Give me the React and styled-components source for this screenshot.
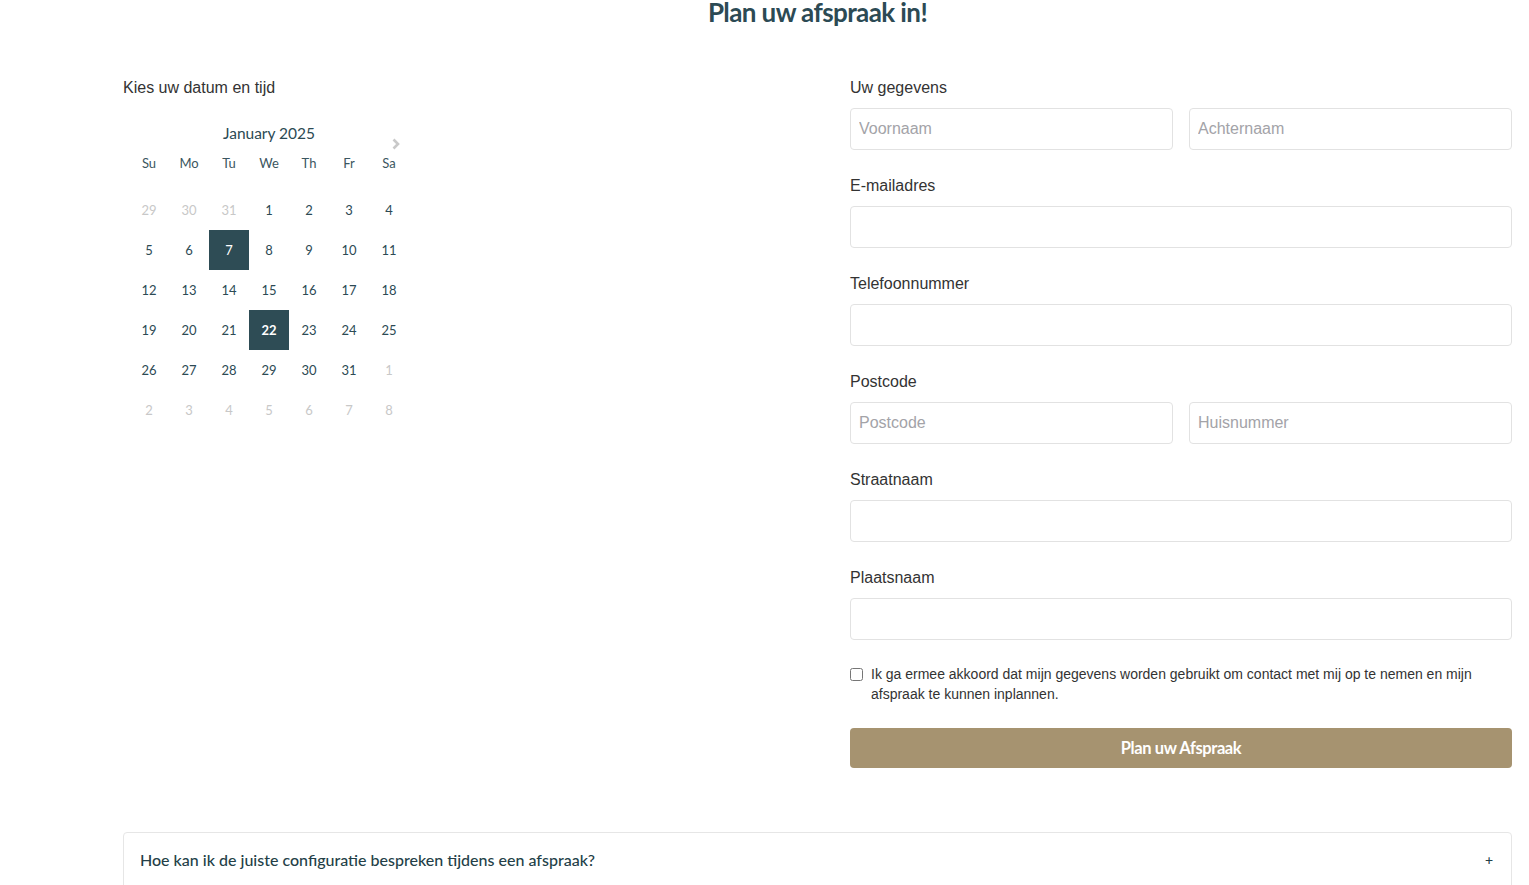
import React from 'react';
import styled, { createGlobalStyle } from 'styled-components';

const GlobalStyle = createGlobalStyle`
  body {
    margin: 0;
    background: #fff;
    font-family: "Liberation Sans", Arial, sans-serif;
    color: #333;
  }
  * { box-sizing: border-box; }
`;

const weekDays = ['Su', 'Mo', 'Tu', 'We', 'Th', 'Fr', 'Sa'];

const buildDays = () => {
  const days = [29, 30, 31].map((d) => ({ d, muted: true }));
  for (let i = 1; i <= 31; i++) days.push({ d: i });
  days.push({ d: 1, muted: true });
  for (let i = 2; i <= 8; i++) days.push({ d: i, muted: true });
  return days;
};

const App = () => {
  const days = buildDays();
  return (
    <Page>
      <GlobalStyle />
      <Title>Plan uw afspraak in!</Title>
      <Columns>
        <div>
          <Label>Kies uw datum en tijd</Label>
          <Calendar>
            <MonthRow>
              January 2025
              <NextButton aria-label="next">
                <svg width="10" height="12" viewBox="0 0 10 12">
                  <path d="M2.5 1.5 L7 6 L2.5 10.5" fill="none" stroke="#c9c9c9" strokeWidth="2.6" />
                </svg>
              </NextButton>
            </MonthRow>
            <WeekRow>
              {weekDays.map((w) => (
                <WeekDay key={w}>{w}</WeekDay>
              ))}
            </WeekRow>
            <DayGrid>
              {days.map((day, i) => (
                <Day
                  key={i}
                  $muted={day.muted}
                  $active={!day.muted && (day.d === 7 || day.d === 22)}
                  $bold={!day.muted && day.d === 22}
                >
                  {day.d}
                </Day>
              ))}
            </DayGrid>
          </Calendar>
        </div>
        <Form>
          <Group>
            <Label>Uw gegevens</Label>
            <Pair>
              <Input placeholder="Voornaam" />
              <Input placeholder="Achternaam" />
            </Pair>
          </Group>
          <Group>
            <Label>E-mailadres</Label>
            <Input />
          </Group>
          <Group>
            <Label>Telefoonnummer</Label>
            <Input />
          </Group>
          <Group>
            <Label>Postcode</Label>
            <Pair>
              <Input placeholder="Postcode" />
              <Input placeholder="Huisnummer" />
            </Pair>
          </Group>
          <Group>
            <Label>Straatnaam</Label>
            <Input />
          </Group>
          <Group>
            <Label>Plaatsnaam</Label>
            <Input />
          </Group>
          <Consent>
            <input type="checkbox" />
            <span>
              Ik ga ermee akkoord dat mijn gegevens worden gebruikt om contact met mij op te nemen en mijn
              afspraak te kunnen inplannen.
            </span>
          </Consent>
          <Submit type="button">Plan uw Afspraak</Submit>
        </Form>
      </Columns>
      <Faq>
        <span>Hoe kan ik de juiste configuratie bespreken tijdens een afspraak?</span>
        <Plus>+</Plus>
      </Faq>
    </Page>
  );
};
export default App;

const Page = styled.div`
  padding: 0 17px 0 123px;
  height: 885px;
  overflow: hidden;
`;
const Title = styled.h1`
  margin: 0;
  text-align: center;
  font-family: Lato, "Open Sans", sans-serif;
  font-size: 26px;
  font-weight: 700;
  letter-spacing: -0.6px;
  line-height: 24px;
  color: #2c4a54;
`;
const Columns = styled.div`
  display: grid;
  grid-template-columns: 1fr 1fr;
  column-gap: 65px;
  margin-top: 53px;
`;
const Label = styled.div`
  padding-top: 1px;
  font-size: 16px;
  line-height: 20px;
  color: #333;
`;
const Calendar = styled.div`
  position: relative;
  width: 280px;
  margin: 25px 0 0 6px;
  font-family: Lato, "Noto Sans", sans-serif;
  color: #2c4a54;
`;
const MonthRow = styled.div`
  position: relative;
  text-align: center;
  font-size: 15.5px;
  line-height: 20px;
`;
const NextButton = styled.span`
  position: absolute;
  right: 8px;
  top: 15px;
  display: flex;
`;
const WeekRow = styled.div`
  display: grid;
  grid-template-columns: repeat(7, 40px);
  margin-top: 10px;
`;
const WeekDay = styled.div`
  text-align: center;
  font-size: 13px;
  line-height: 20px;
  color: #3b5660;
`;
const DayGrid = styled.div`
  display: grid;
  grid-template-columns: repeat(7, 40px);
  grid-auto-rows: 40px;
  margin-top: 17px;
`;
const Day = styled.div`
  display: flex;
  align-items: center;
  justify-content: center;
  padding-bottom: 1px;
  font-size: 13px;
  font-weight: ${(p) => (p.$bold ? 700 : 400)};
  color: ${(p) => (p.$active ? '#fff' : p.$muted ? '#c8c8c8' : '#2c4a54')};
  background: ${(p) => (p.$active ? '#2e4c55' : 'transparent')};
`;
const Form = styled.div`
  display: flex;
  flex-direction: column;
`;
const Group = styled.div`
  display: flex;
  flex-direction: column;
  gap: 10px;
  margin-bottom: 25px;
`;
const Pair = styled.div`
  display: grid;
  grid-template-columns: 1fr 1fr;
  gap: 16px;
`;
const Input = styled.input`
  height: 42px;
  width: 100%;
  border: 1px solid #e2e2e2;
  border-radius: 4px;
  padding: 0 8px;
  font-family: "Liberation Sans", Arial, sans-serif;
  font-size: 16px;
  color: #333;
  outline: none;
  &::placeholder {
    color: #a3a3a8;
  }
`;
const Consent = styled.label`
  display: flex;
  align-items: flex-start;
  gap: 8px;
  margin-top: -1px;
  font-size: 14px;
  line-height: 20px;
  color: #333;
  input {
    margin: 4px 0 0;
    width: 13px;
    height: 13px;
    flex-shrink: 0;
  }
`;
const Submit = styled.button`
  margin-top: 24px;
  height: 40px;
  border: none;
  border-radius: 4px;
  background: #a69370;
  color: #fff;
  font-family: Lato, sans-serif;
  font-size: 16.5px;
  font-weight: 700;
  letter-spacing: -0.4px;
  cursor: pointer;
`;
const Faq = styled.div`
  display: flex;
  justify-content: space-between;
  align-items: center;
  margin-top: 64px;
  padding: 17px 16px 18px 16px;
  border: 1px solid #e6e6e6;
  border-radius: 4px;
  font-family: Lato, sans-serif;
  font-size: 16px;
  font-weight: 500;
  letter-spacing: 0px;
  line-height: 20px;
  color: #243f48;
`;
const Plus = styled.span`
  font-size: 14px;
  margin-right: 2px;
`;
